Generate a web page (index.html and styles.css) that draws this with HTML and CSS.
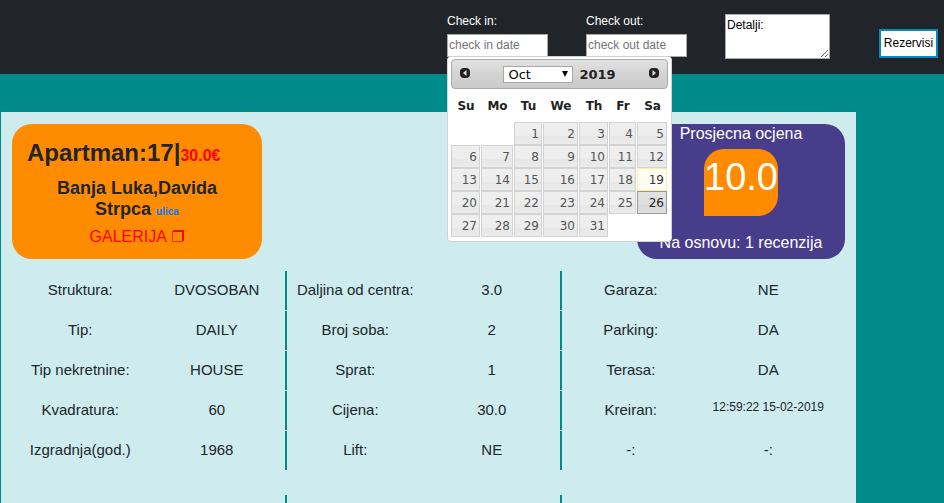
FILE: index.html
```html
<!DOCTYPE html>
<html lang="sr-Latn">
<head>
<meta charset="utf-8">
<title>Apartman 17</title>
<link rel="stylesheet" href="styles.css">
</head>
<body>
<header class="topbar">
  <form class="booking">
    <div class="field">
      <label for="checkin">Check in:</label>
      <input id="checkin" type="text" placeholder="check in date">
      <div class="datepicker">
        <div class="dp-header">
          <button class="dp-nav" type="button" aria-label="Prev"><svg viewBox="0 0 10 10"><rect width="10" height="10" rx="4"/><path d="M6.500 2v6L3 5z"/></svg></button>
          <div class="dp-title">
            <span class="dp-month"><select aria-label="Month"><option>Oct</option><option>Nov</option><option>Dec</option></select></span>
            <span>2019</span>
          </div>
          <button class="dp-nav" type="button" aria-label="Next"><svg viewBox="0 0 10 10"><rect width="10" height="10" rx="4"/><path d="M3.500 2v6L7 5z"/></svg></button>
        </div>
        <table class="dp-days">
          <colgroup><col class="su"><col class="mo"><col class="tu"><col class="we"><col class="th"><col class="fr"><col class="sa"></colgroup>
          <thead><tr><th>Su</th><th>Mo</th><th>Tu</th><th>We</th><th>Th</th><th>Fr</th><th>Sa</th></tr></thead>
          <tbody>
            <tr><td></td><td></td><td><a href="#">1</a></td><td><a href="#">2</a></td><td><a href="#">3</a></td><td><a href="#">4</a></td><td><a href="#">5</a></td></tr>
            <tr><td><a href="#">6</a></td><td><a href="#">7</a></td><td><a href="#">8</a></td><td><a href="#">9</a></td><td><a href="#">10</a></td><td><a href="#">11</a></td><td><a href="#">12</a></td></tr>
            <tr><td><a href="#">13</a></td><td><a href="#">14</a></td><td><a href="#">15</a></td><td><a href="#">16</a></td><td><a href="#">17</a></td><td><a href="#">18</a></td><td><a class="today" href="#">19</a></td></tr>
            <tr><td><a href="#">20</a></td><td><a href="#">21</a></td><td><a href="#">22</a></td><td><a href="#">23</a></td><td><a href="#">24</a></td><td><a href="#">25</a></td><td><a class="hover" href="#">26</a></td></tr>
            <tr><td><a href="#">27</a></td><td><a href="#">28</a></td><td><a href="#">29</a></td><td><a href="#">30</a></td><td><a href="#">31</a></td><td></td><td></td></tr>
          </tbody>
        </table>
      </div>
    </div>
    <div class="field">
      <label for="checkout">Check out:</label>
      <input id="checkout" type="text" placeholder="check out date">
    </div>
    <textarea class="details" aria-label="Detalji">Detalji:</textarea>
    <button class="reserve" type="submit">Rezervisi</button>
  </form>
</header>
<main class="panel">
  <div class="cards">
    <section class="summary">
      <h1>Apartman:17|<span class="price">30.0€</span></h1>
      <h2>Banja Luka,Davida Strpca <a class="street" href="#">ulica</a></h2>
      <a class="gallery" href="#">GALERIJA <svg viewBox="0 0 12 12"><path class="thin" d="M.5 1v10.500h10.500"/><path d="M1 1h10v10"/></svg></a>
    </section>
    <section class="rating">
      <div>Prosjecna ocjena</div>
      <div class="score">10.0</div>
      <div>Na osnovu: 1 recenzija</div>
    </section>
  </div>
  <div class="specs">
    <dl><dt>Struktura:</dt><dd>DVOSOBAN</dd></dl><dl><dt>Daljina od centra:</dt><dd>3.0</dd></dl><dl><dt>Garaza:</dt><dd>NE</dd></dl>
    <dl><dt>Tip:</dt><dd>DAILY</dd></dl><dl><dt>Broj soba:</dt><dd>2</dd></dl><dl><dt>Parking:</dt><dd>DA</dd></dl>
    <dl><dt>Tip nekretnine:</dt><dd>HOUSE</dd></dl><dl><dt>Sprat:</dt><dd>1</dd></dl><dl><dt>Terasa:</dt><dd>DA</dd></dl>
    <dl><dt>Kvadratura:</dt><dd>60</dd></dl><dl><dt>Cijena:</dt><dd>30.0</dd></dl><dl><dt>Kreiran:</dt><dd class="stamp">12:59:22 15-02-2019</dd></dl>
    <dl><dt>Izgradnja(god.)</dt><dd>1968</dd></dl><dl><dt>Lift:</dt><dd>NE</dd></dl><dl><dt>-:</dt><dd>-:</dd></dl>
  </div>
  <div class="specs specs-more">
    <dl></dl><dl></dl><dl></dl>
  </div>
</main>
</body>
</html>
```
FILE: styles.css
```css
* { box-sizing: border-box; }
html { height: 100%; }
body {
  margin: 0;
  height: 100%;
  display: flex;
  flex-direction: column;
  background: #008b8b;
  color: #212529;
  font-family: "Liberation Sans", Arial, sans-serif;
  font-size: 15px;
}
a { text-decoration: none; }
input, textarea, button, select { font-family: inherit; border-radius: 0; }

.topbar { background: #212529; padding: 14px 6px 15px; }
.booking { display: flex; justify-content: flex-end; align-items: flex-start; font-size: 12px; }
.field { position: relative; width: 101px; margin-right: 38px; }
.field label { display: block; color: #fff; line-height: 14px; margin-bottom: 6px; }
.field input {
  display: block;
  width: 100%;
  height: 23px;
  padding: 0 1px 2px;
  border: 1px solid #a9a9a9;
  font-size: 12px;
}
.field input::placeholder { color: #757575; }
.details {
  width: 105px;
  height: 45px;
  margin-right: 49px;
  padding: 2px 1px;
  border: 1px solid #a9a9a9;
  font-size: 12px;
  line-height: 16px;
  color: #000;
}
.reserve {
  width: 59px;
  height: 29px;
  margin-top: 15px;
  padding: 0 0 2px;
  border: 2px solid #008cba;
  background: #fff;
  color: #000;
  font-size: 12px;
}

.datepicker {
  position: absolute;
  top: 42px;
  left: 0;
  z-index: 2;
  width: 225px;
  padding: 2px 3px 4px;
  border: 1px solid #d3d3d3;
  border-radius: 4px;
  background: #fff;
  color: #222;
  font-family: Verdana, "DejaVu Sans", sans-serif;
}
.dp-header {
  display: flex;
  align-items: center;
  justify-content: space-between;
  height: 30px;
  padding: 0 8px;
  border: 1px solid #aaa;
  border-radius: 4px;
  background: linear-gradient(#e2e2e2, #d4d4d4 50%, #cacaca);
  font-size: 13px;
  font-weight: bold;
}
.dp-nav { width: 10px; height: 10px; padding: 0; border: 0; background: none; margin-bottom: 2px; }
.dp-nav svg { display: block; width: 10px; height: 10px; fill: #222; }
.dp-nav path { fill: #ddd; }
.dp-title { display: flex; align-items: center; gap: 6px; }
.dp-month { position: relative; display: block; }
.dp-month::after {
  content: "";
  position: absolute;
  top: 5px;
  right: 5px;
  border: 3px solid transparent;
  border-top: 6px solid #000;
  border-bottom: 0;
}
.dp-month select {
  display: block;
  appearance: none;
  width: 70px;
  height: 17px;
  padding: 0 4px;
  border: 1px solid #a9a9a9;
  background: #fff;
  color: #000;
  font-size: 13px;
  line-height: 15px;
}
.dp-days { width: 217px; table-layout: fixed; border-collapse: collapse; margin: 5px 0 0; font-size: 12px; }
.dp-days .su, .dp-days .th { width: 30px; }
.dp-days .mo { width: 33px; }
.dp-days .tu { width: 29px; }
.dp-days .we { width: 36px; }
.dp-days .fr { width: 28px; }
.dp-days .sa { width: 31px; }
.dp-days th { height: 28px; padding: 0 0 5px; }
.dp-days td { height: 23px; padding: 0 1px 0 0; }
.dp-days a {
  display: block;
  height: 23px;
  padding: 0 2px;
  border: 1px solid #d3d3d3;
  background: linear-gradient(#efefef, #ededed 60%, #e6e6e6 60%, #ebebeb);
  color: #555;
  line-height: 22px;
  text-align: right;
}
.dp-days .today { border-color: #fcefa1; background: #fdfcf3; color: #363636; }
.dp-days .hover { border-color: #999; background: linear-gradient(#e2e2e2, #dedede 60%, #d8d8d8 60%, #e0e0e0); color: #212121; }

.panel {
  flex: 1;
  min-height: 0;
  overflow: hidden;
  margin: 38px 88px 0 1px;
  padding: 12px 11px 0;
  background: #ceecee;
}
.cards { display: flex; justify-content: space-between; }
.summary {
  width: 250px;
  height: 135px;
  padding: 14px 15px;
  border-radius: 20px;
  background: #ff8c00;
  text-align: center;
}
.summary h1 { margin: 0 0 8px; font-size: 24px; line-height: 29px; text-align: left; }
.summary h2 { margin: 0 20px 7px; font-size: 18px; line-height: 21px; }
.price { font-size: 16px; color: #f00; }
.street { font-size: 10px; line-height: 12px; color: #007bff; }
.gallery { display: block; font-size: 16px; line-height: 20px; color: #f00; }
.gallery svg { width: 12px; height: 12px; margin-left: 2px; fill: none; stroke: #f00; stroke-width: 2; }
.gallery .thin { stroke-width: 1; opacity: .7; }
.rating {
  display: flex;
  flex-direction: column;
  align-items: center;
  width: 208px;
  height: 135px;
  border-radius: 20px;
  background: #483d8b;
  color: #fff;
  font-size: 16px;
  line-height: 20px;
}
.score {
  height: 67px;
  margin: 5px 0 17px;
  border-radius: 20px 20px 20px 0;
  background: #ff8c00;
  font-size: 38px;
  line-height: 56px;
}

.specs { display: grid; grid-template-columns: repeat(3, 1fr); row-gap: 1px; margin: 12px 8px 0 0; }
.specs dl { display: flex; height: 39px; margin: 0; border-right: 2px solid #008b8b; line-height: 38px; text-align: center; }
.specs dl:nth-child(3n) { border-right: 0; }
.specs dt, .specs dd { flex: 1; margin: 0; white-space: nowrap; }
.specs .stamp { font-size: 12px; line-height: 32px; }
.specs-more { margin-top: 25px; }
```
